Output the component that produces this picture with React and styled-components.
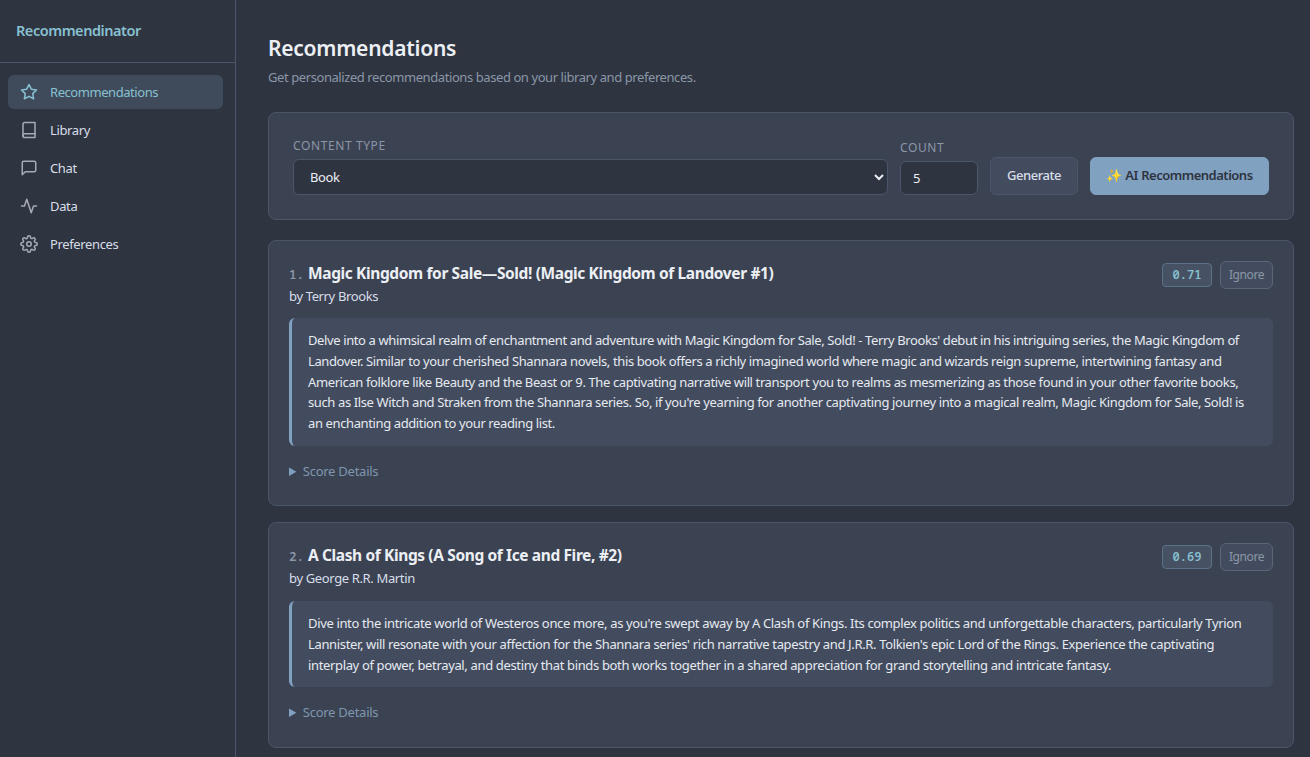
import React from "react";
import styled, { createGlobalStyle, css, ThemeProvider } from "styled-components";

const theme = {
  bg: "#2e3440",
  surface: "#3b4252",
  raised: "#434c5e",
  border: "#4c566a",
  text: "#eceff4",
  textSoft: "#d8dee9",
  muted: "#8b97a8",
  accent: "#88c0d0",
  blue: "#81a1c1",
  sans: '"Noto Sans", "Open Sans", sans-serif',
  mono: '"Noto Sans Mono", "DejaVu Sans Mono", monospace',
};

const GlobalStyle = createGlobalStyle`
  *, *::before, *::after {
    box-sizing: border-box;
  }

  body {
    margin: 0;
    overflow: hidden;
    background: ${theme.bg};
    color: ${theme.text};
    font-family: ${theme.sans};
    font-size: 13px;
    line-height: 20px;
    letter-spacing: -0.36px;
  }
`;

const Layout = styled.div`
  display: grid;
  grid-template-columns: 236px minmax(0, 1fr);
  height: 757px;
  overflow: hidden;
`;

const Sidebar = styled.aside`
  border-right: 1px solid ${(p) => p.theme.border};
`;

const Brand = styled.div`
  height: 63px;
  padding: 19px 16px;
  border-bottom: 1px solid ${(p) => p.theme.border};
  color: ${(p) => p.theme.accent};
  font-size: 14.5px;
  font-weight: 600;
  line-height: 22px;
  letter-spacing: -0.46px;
`;

const Nav = styled.nav`
  display: flex;
  flex-direction: column;
  gap: 4px;
  padding: 12px 12px 12px 8px;
`;

const NavItem = styled.a`
  display: flex;
  align-items: center;
  gap: 12px;
  height: 34px;
  padding: 0 12px;
  border-radius: 6px;
  color: ${(p) => p.theme.textSoft};

  svg {
    width: 18px;
    height: 18px;
    opacity: 0.7;
  }

  ${(p) =>
    p.$active &&
    css`
      background: #3f4b5b;
      color: ${p.theme.accent};
      letter-spacing: -0.44px;

      svg {
        opacity: 1;
      }
    `}
`;

const Main = styled.main`
  padding: 32px 16px 0 32px;
`;

const PageTitle = styled.h1`
  margin: 0;
  font-size: 21px;
  font-weight: 600;
  line-height: 32px;
  letter-spacing: -0.25px;
`;

const Subtitle = styled.p`
  margin: 3px 0 25px;
  color: ${(p) => p.theme.muted};
  letter-spacing: -0.42px;
`;

const Panel = styled.section`
  border: 1px solid ${(p) => p.theme.border};
  border-radius: 8px;
  background: ${(p) => p.theme.surface};
`;

const Controls = styled(Panel)`
  display: flex;
  align-items: flex-end;
  gap: 12px;
  height: 108px;
  margin-bottom: 20px;
  padding: 24px;
`;

const Field = styled.label`
  display: flex;
  flex-direction: column;
  gap: 3px;
  flex: ${(p) => (p.$width ? `0 0 ${p.$width}` : "1")};
`;

const FieldLabel = styled.span`
  color: ${(p) => p.theme.muted};
  font-size: 12px;
  line-height: 20px;
  letter-spacing: 0.6px;
  text-transform: uppercase;
`;

const controlStyles = css`
  width: 100%;
  border: 1px solid ${(p) => p.theme.border};
  border-radius: 6px;
  background: ${(p) => p.theme.bg};
  color: ${(p) => p.theme.text};
  font: 13px ${(p) => p.theme.sans};
  letter-spacing: -0.4px;
`;

const Select = styled.select`
  ${controlStyles};
  height: 36px;
  padding: 0 0 0 12px;
`;

const CountInput = styled.input`
  ${controlStyles};
  height: 34px;
  padding: 0 12px;
`;

const Button = styled.button`
  height: 38px;
  padding: 0 0 2px;
  width: ${(p) => p.$width};
  border: 1px solid ${(p) => p.theme.border};
  border-radius: 6px;
  background: ${(p) => p.theme.raised};
  color: ${(p) => p.theme.textSoft};
  font: 500 13px ${(p) => p.theme.sans};
  letter-spacing: -0.45px;
  white-space: nowrap;

  ${(p) =>
    p.$primary &&
    css`
      border-color: ${p.theme.blue};
      background: ${p.theme.blue};
      color: ${p.theme.bg};
      font-weight: 600;
      letter-spacing: -0.5px;
      word-spacing: 0.5px;
    `}
`;

const Card = styled(Panel)`
  height: ${(p) => p.$height};
  margin-bottom: 16px;
  padding: 20px;
`;

const CardHeader = styled.header`
  display: flex;
  justify-content: space-between;
  align-items: flex-start;
  height: ${(p) => p.$height};
`;

const CardTitle = styled.h3`
  display: flex;
  align-items: baseline;
  gap: 4px;
  margin: 0;
  font-size: 15.5px;
  font-weight: 700;
  line-height: 24px;
  letter-spacing: -0.38px;
`;

const Rank = styled.span`
  width: 15px;
  color: ${(p) => p.theme.muted};
  font-family: ${(p) => p.theme.mono};
  font-size: 12.5px;
  font-weight: 600;
  letter-spacing: 0;
`;

const Author = styled.div`
  color: ${(p) => p.theme.textSoft};
  line-height: 19px;
`;

const CardActions = styled.div`
  display: flex;
  align-items: center;
  gap: 8px;
`;

const Score = styled.span`
  width: 50px;
  height: 24px;
  border: 1px solid #5a7288;
  border-radius: 4px;
  background: #465264;
  color: ${(p) => p.theme.accent};
  font: 600 12px/22px ${(p) => p.theme.mono};
  letter-spacing: 0;
  text-align: center;
`;

const IgnoreButton = styled(Button)`
  width: 53px;
  height: 28px;
  padding: 0 0 1px;
  border-color: #5b6576;
  color: ${(p) => p.theme.muted};
  font-size: 12px;
  font-weight: 400;
  letter-spacing: -0.4px;
`;

const Reason = styled.div`
  padding: 12px 16px;
  border-left: 3px solid ${(p) => p.theme.blue};
  border-radius: 6px;
  background: ${(p) => p.theme.raised};
  color: #e5e9f0;
  line-height: 20.8px;
  letter-spacing: ${(p) => p.$tracking};
`;

const Line = styled.div`
  white-space: nowrap;
`;

const Details = styled.details`
  margin-top: 15px;
  color: #7f97ae;
  line-height: 21px;
  letter-spacing: -0.25px;
`;

const Summary = styled.summary`
  cursor: pointer;

  &::marker {
    color: ${(p) => p.theme.blue};
  }
`;

function Icon({ children }) {
  return (
    <svg
      viewBox="0 0 24 24"
      fill="none"
      stroke="currentColor"
      strokeWidth="2"
      strokeLinecap="round"
      strokeLinejoin="round"
    >
      {children}
    </svg>
  );
}

const NAV_ITEMS = [
  {
    label: "Recommendations",
    active: true,
    icon: (
      <polygon points="12 2 15.09 8.26 22 9.27 17 14.14 18.18 21.02 12 17.77 5.82 21.02 7 14.14 2 9.27 8.91 8.26 12 2" />
    ),
  },
  {
    label: "Library",
    icon: (
      <>
        <path d="M4 19.5A2.5 2.5 0 0 1 6.5 17H20" />
        <path d="M6.5 2H20v20H6.5A2.5 2.5 0 0 1 4 19.5v-15A2.5 2.5 0 0 1 6.5 2z" />
      </>
    ),
  },
  {
    label: "Chat",
    icon: <path d="M21 15a2 2 0 0 1-2 2H7l-4 4V5a2 2 0 0 1 2-2h14a2 2 0 0 1 2 2z" />,
  },
  {
    label: "Data",
    icon: <polyline points="22 12 18 12 15 21 9 3 6 12 2 12" />,
  },
  {
    label: "Preferences",
    icon: (
      <>
        <circle cx="12" cy="12" r="3" />
        <path d="M19.4 15a1.65 1.65 0 0 0 .33 1.82l.06.06a2 2 0 0 1 0 2.83 2 2 0 0 1-2.83 0l-.06-.06a1.65 1.65 0 0 0-1.82-.33 1.65 1.65 0 0 0-1 1.51V21a2 2 0 0 1-2 2 2 2 0 0 1-2-2v-.09A1.65 1.65 0 0 0 9 19.4a1.65 1.65 0 0 0-1.82.33l-.06.06a2 2 0 0 1-2.83 0 2 2 0 0 1 0-2.83l.06-.06a1.65 1.65 0 0 0 .33-1.82 1.65 1.65 0 0 0-1.51-1H3a2 2 0 0 1-2-2 2 2 0 0 1 2-2h.09A1.65 1.65 0 0 0 4.6 9a1.65 1.65 0 0 0-.33-1.82l-.06-.06a2 2 0 0 1 0-2.83 2 2 0 0 1 2.83 0l.06.06a1.65 1.65 0 0 0 1.82.33H9a1.65 1.65 0 0 0 1-1.51V3a2 2 0 0 1 2-2 2 2 0 0 1 2 2v.09a1.65 1.65 0 0 0 1 1.51 1.65 1.65 0 0 0 1.82-.33l.06-.06a2 2 0 0 1 2.83 0 2 2 0 0 1 0 2.83l-.06.06a1.65 1.65 0 0 0-.33 1.82V9a1.65 1.65 0 0 0 1.51 1H21a2 2 0 0 1 2 2 2 2 0 0 1-2 2h-.09a1.65 1.65 0 0 0-1.51 1z" />
      </>
    ),
  },
];

const ITEMS = [
  {
    title: "Magic Kingdom for Sale—Sold! (Magic Kingdom of Landover #1)",
    author: "Terry Brooks",
    score: "0.71",
    height: "266.4px",
    headerHeight: "57px",
    tracking: "-0.385px",
    reason: [
      "Delve into a whimsical realm of enchantment and adventure with Magic Kingdom for Sale, Sold! - Terry Brooks' debut in his intriguing series, the Magic Kingdom of",
      "Landover. Similar to your cherished Shannara novels, this book offers a richly imagined world where magic and wizards reign supreme, intertwining fantasy and",
      "American folklore like Beauty and the Beast or 9. The captivating narrative will transport you to realms as mesmerizing as those found in your other favorite books,",
      "such as Ilse Witch and Straken from the Shannara series. So, if you're yearning for another captivating journey into a magical realm, Magic Kingdom for Sale, Sold! is",
      "an enchanting addition to your reading list.",
    ],
  },
  {
    title: "A Clash of Kings (A Song of Ice and Fire, #2)",
    author: "George R.R. Martin",
    score: "0.69",
    height: "225.6px",
    headerHeight: "57.6px",
    tracking: "-0.35px",
    reason: [
      "Dive into the intricate world of Westeros once more, as you're swept away by A Clash of Kings. Its complex politics and unforgettable characters, particularly Tyrion",
      "Lannister, will resonate with your affection for the Shannara series' rich narrative tapestry and J.R.R. Tolkien's epic Lord of the Rings. Experience the captivating",
      "interplay of power, betrayal, and destiny that binds both works together in a shared appreciation for grand storytelling and intricate fantasy.",
    ],
  },
];

function Recommendation({ item, rank }) {
  return (
    <Card $height={item.height}>
      <CardHeader $height={item.headerHeight}>
        <div>
          <CardTitle>
            <Rank>{rank}.</Rank>
            <span>{item.title}</span>
          </CardTitle>
          <Author>by {item.author}</Author>
        </div>
        <CardActions>
          <Score>{item.score}</Score>
          <IgnoreButton>Ignore</IgnoreButton>
        </CardActions>
      </CardHeader>
      <Reason $tracking={item.tracking}>
        {item.reason.map((line) => (
          <Line key={line}>{line}</Line>
        ))}
      </Reason>
      <Details>
        <Summary>Score Details</Summary>
      </Details>
    </Card>
  );
}

function App() {
  return (
    <ThemeProvider theme={theme}>
      <GlobalStyle />
      <Layout>
        <Sidebar>
          <Brand>Recommendinator</Brand>
          <Nav>
            {NAV_ITEMS.map(({ label, icon, active }) => (
              <NavItem key={label} $active={active}>
                <Icon>{icon}</Icon>
                {label}
              </NavItem>
            ))}
          </Nav>
        </Sidebar>
        <Main>
          <PageTitle>Recommendations</PageTitle>
          <Subtitle>
            Get personalized recommendations based on your library and preferences.
          </Subtitle>
          <Controls>
            <Field>
              <FieldLabel>Content Type</FieldLabel>
              <Select defaultValue="book">
                <option value="book">Book</option>
              </Select>
            </Field>
            <Field $width="78px">
              <FieldLabel>Count</FieldLabel>
              <CountInput defaultValue="5" />
            </Field>
            <Button $width="88px">Generate</Button>
            <Button $primary $width="179px">
              ✨ AI Recommendations
            </Button>
          </Controls>
          {ITEMS.map((item, i) => (
            <Recommendation key={item.title} item={item} rank={i + 1} />
          ))}
        </Main>
      </Layout>
    </ThemeProvider>
  );
}

export default App;
